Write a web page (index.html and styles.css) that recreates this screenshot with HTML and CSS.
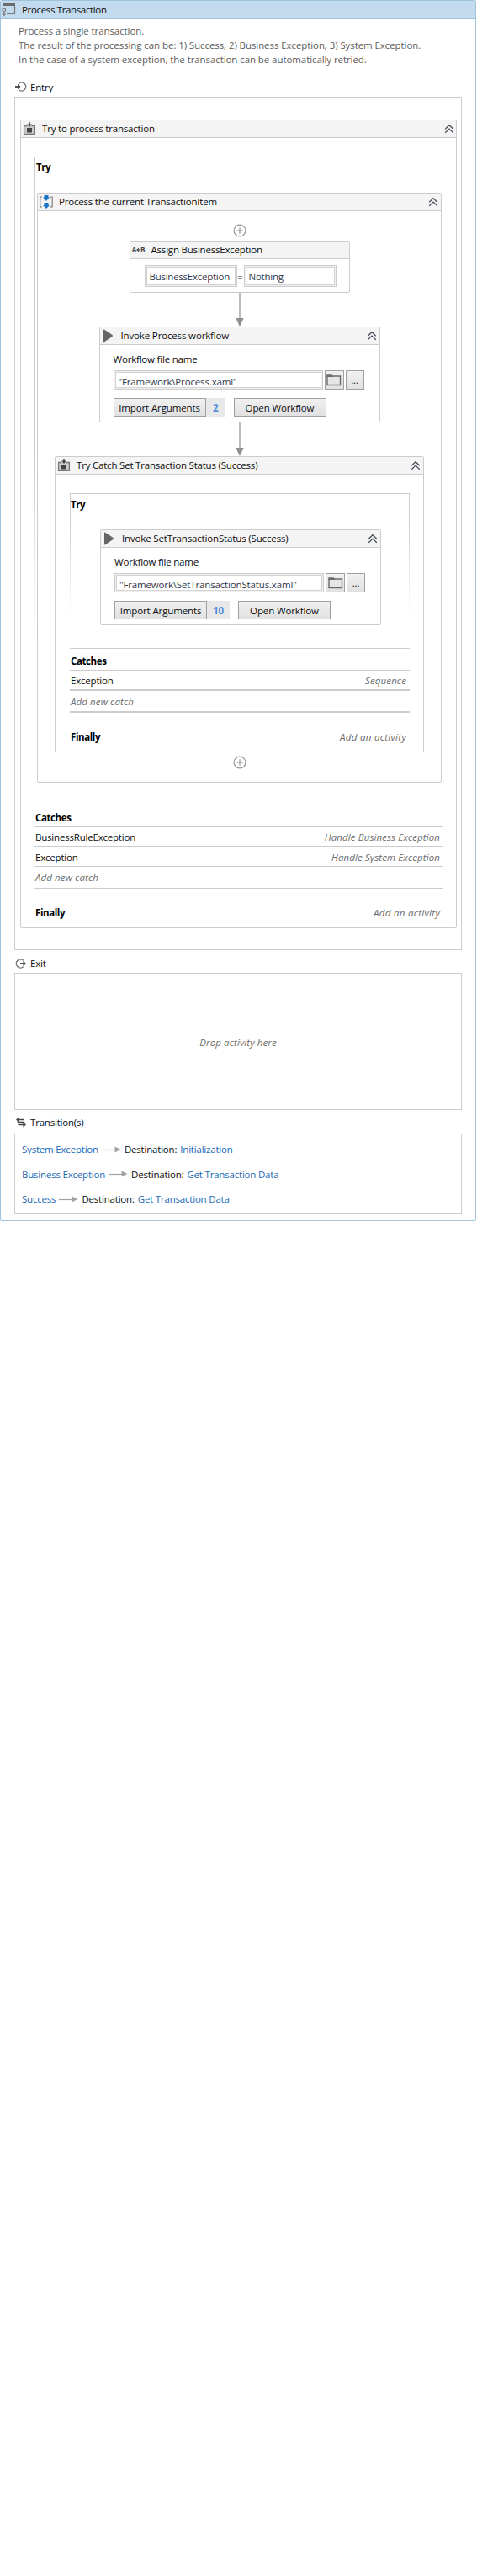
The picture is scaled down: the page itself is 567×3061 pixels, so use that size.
FILE: index.html
```html
<!DOCTYPE html>
<html lang="en">
<head>
<meta charset="utf-8">
<title>Process Transaction</title>
<link rel="stylesheet" href="styles.css">
</head>
<body>
<svg class="defs" width="0" height="0">
  <symbol id="chev" viewBox="0 0 12 12"><path d="M1.2 6.3 6 1.7l4.800 4.600M1.200 10.700 6 6.100l4.800 4.600" fill="none" stroke="#4a4f5e" stroke-width="1.300"/></symbol>
  <symbol id="trycatch" viewBox="0 0 16 16"><path d="M1.600 4.500V14.300H14.400V4.500" fill="#ccc"/><path d="M5.500 4.500H1.600V14.300H14.400V4.500H10.500" fill="none" stroke="#777" stroke-width="1.300"/><rect x="5" y="7" width="6" height="5.500" fill="#444"/><path d="M7.200 0h1.600v2.500H11L8 6 5 2.500h2.200z" fill="#444"/></symbol>
  <symbol id="plus" viewBox="0 0 16 16"><circle cx="8" cy="8" r="6.900" fill="#fff" stroke="#8f8f8f" stroke-width="1.100"/><path d="M8 4.200v7.600M4.200 8h7.600" stroke="#8f8f8f" stroke-width="1.100"/></symbol>
  <symbol id="play" viewBox="0 0 13 16"><path d="M1 1.200Q1 0 2.200.7L11.500 7.100Q12.500 8 11.500 8.900L2.200 15.300Q1 16 1 14.800z" fill="#666"/></symbol>
  <symbol id="down" viewBox="0 0 10 40"><path d="M5 0v32" stroke="#8f8f8f" stroke-width="1.200"/><path d="M.3 30h9.400L5 40z" fill="#8f8f8f"/></symbol>
  <symbol id="folder" viewBox="0 0 18 14"><path d="M1 2h15.500v10.500H1z" fill="#e6e6e6" stroke="#6b6b6b" stroke-width="1.400"/><path d="M.3.300h6.500l1.400 2.700H.3z" fill="#6b6b6b"/></symbol>
  <symbol id="right" viewBox="0 0 23 8"><path d="M0 4.500h17" stroke="#a3a3a3" stroke-width="1.200"/><path d="M15.500.5 22.500 4l-7 3.500z" fill="#a3a3a3"/></symbol>
</svg>
<main class="state">
  <header class="state-head">
    <svg class="state-icon" width="17" height="17" viewBox="0 0 17 17"><path d="M1 .5h15V4H1z" fill="#6b6b6b"/><path d="M15.500 3v10.500H6" fill="none" stroke="#777" stroke-width="1.200"/><circle cx="2.800" cy="9" r="1.900" fill="none" stroke="#777" stroke-width="1.100"/><path d="M2.800 11v5M1 13.500l1.800 2 1.800-2" fill="none" stroke="#777" stroke-width="1.100"/></svg>
    <span>Process Transaction</span>
  </header>
  <div class="desc"><p>Process a single transaction.</p><p>The result of the processing can be: 1) Success, 2) Business Exception, 3) System Exception.</p><p>In the case of a system exception, the transaction can be automatically retried.</p></div>

  <div class="label label-entry"><svg width="14" height="12" viewBox="0 0 14 12"><path d="M4.300 2.300A5 5 0 1 1 4.300 9.700" fill="none" stroke="#777" stroke-width="1.500"/><path d="M0 6h4" stroke="#444" stroke-width="1.800"/><path d="M3 2.800 6.500 6 3 9.200z" fill="#444"/></svg><span>Entry</span></div>
  <section class="entry">
    <article class="card outer-try">
      <header class="head"><svg width="16" height="16"><use href="#trycatch"/></svg><span>Try to process transaction</span><svg class="chev" width="12" height="12"><use href="#chev"/></svg></header>
      <div class="try try-a">
        <h3>Try</h3>
        <article class="card sequence">
          <header class="head"><svg width="16" height="16" viewBox="0 0 16 16"><path d="M3 2H.8v12H3M13 2h2.200v12H13" fill="none" stroke="#777" stroke-width="1.100"/><path d="M5.500 0h5v2.500H12L8 7 4 2.500h1.500zM5.500 9h5v3H12l-4 4-4-4h1.500z" fill="#1a73c8"/></svg><span>Process the current TransactionItem</span><svg class="chev" width="12" height="12"><use href="#chev"/></svg></header>
          <div class="flow">
            <svg class="plus" width="16" height="16"><use href="#plus"/></svg>
            <article class="card assign">
              <header class="head"><b class="ab">A<svg width="5" height="6" viewBox="0 0 5 6"><path d="M0 3 3 .5v5zM2 2.300h3v1.400H2z" fill="#555"/></svg>B</b><span>Assign BusinessException</span></header>
              <div class="assign-row"><div class="input">BusinessException</div><i>=</i><div class="input">Nothing</div></div>
            </article>
            <svg class="down" width="10" height="40"><use href="#down"/></svg>
            <article class="card invoke">
              <header class="head"><svg width="13" height="16"><use href="#play"/></svg><span>Invoke Process workflow</span><svg class="chev" width="12" height="12"><use href="#chev"/></svg></header>
              <div class="body">
                <div class="field-label">Workflow file name</div>
                <div class="file-row"><div class="input path">"Framework\Process.xaml"</div><div class="btn"><svg width="18" height="14"><use href="#folder"/></svg></div><div class="btn dots">...</div></div>
                <div class="btn-row"><div class="btn wide">Import Arguments</div><b class="badge">2</b><div class="btn wide open">Open Workflow</div></div>
              </div>
            </article>
            <svg class="down" width="10" height="40"><use href="#down"/></svg>
            <article class="card inner-try">
              <header class="head"><svg width="16" height="16"><use href="#trycatch"/></svg><span>Try Catch Set Transaction Status (Success)</span><svg class="chev" width="12" height="12"><use href="#chev"/></svg></header>
              <div class="try try-b">
                <h3>Try</h3>
                <article class="card invoke">
                  <header class="head"><svg width="13" height="16"><use href="#play"/></svg><span>Invoke SetTransactionStatus (Success)</span><svg class="chev" width="12" height="12"><use href="#chev"/></svg></header>
                  <div class="body">
                    <div class="field-label">Workflow file name</div>
                    <div class="file-row"><div class="input path">"Framework\SetTransactionStatus.xaml"</div><div class="btn"><svg width="18" height="14"><use href="#folder"/></svg></div><div class="btn dots">...</div></div>
                    <div class="btn-row"><div class="btn wide">Import Arguments</div><b class="badge badge-lg">10</b><div class="btn wide open">Open Workflow</div></div>
                  </div>
                </article>
              </div>
              <div class="catches catches-b">
                <div class="row title"><b>Catches</b></div>
                <div class="row thick"><span>Exception</span><em>Sequence</em></div>
                <div class="row add thick"><em>Add new catch</em></div>
                <div class="row finally"><b>Finally</b><em>Add an activity</em></div>
              </div>
            </article>
            <svg class="plus plus-end" width="16" height="16"><use href="#plus"/></svg>
          </div>
        </article>
      </div>
      <div class="catches catches-a">
        <div class="row title"><b>Catches</b></div>
        <div class="row thick"><span>BusinessRuleException</span><em>Handle Business Exception</em></div>
        <div class="row short"><span>Exception</span><em>Handle System Exception</em></div>
        <div class="row add"><em>Add new catch</em></div>
        <div class="row finally"><b>Finally</b><em>Add an activity</em></div>
      </div>
    </article>
  </section>

  <div class="label label-exit"><svg width="14" height="12" viewBox="0 0 14 12"><path d="M9.700 2.300A5 5 0 1 0 9.700 9.700" fill="none" stroke="#777" stroke-width="1.500"/><path d="M6 6h5" stroke="#444" stroke-width="1.800"/><path d="M9.500 2.800 13 6l-3.500 3.200z" fill="#444"/></svg><span>Exit</span></div>
  <section class="exit"><em>Drop activity here</em></section>

  <div class="label label-trans"><svg width="14" height="13" viewBox="0 0 14 13"><path d="M3 3.500h7.500M3.500 9.500H11M3.500 3.500v3h7v3" fill="none" stroke="#444" stroke-width="1.500"/><path d="M4.500.5v6L1 3.500zM9.500 6.500v6l3.500-3z" fill="#444"/></svg><span>Transition(s)</span></div>
  <section class="transitions">
    <div class="tr"><a>System Exception</a><svg width="23" height="8"><use href="#right"/></svg><span>Destination:</span><a>Initialization</a></div>
    <div class="tr"><a>Business Exception</a><svg width="23" height="8"><use href="#right"/></svg><span>Destination:</span><a>Get Transaction Data</a></div>
    <div class="tr"><a>Success</a><svg width="23" height="8"><use href="#right"/></svg><span>Destination:</span><a>Get Transaction Data</a></div>
  </section>
</main>
</body>
</html>
```
FILE: styles.css
```css
* { box-sizing: border-box; }
body { margin: 0; background: #fff; color: #0c0c0c; font: 11.5px/17px "Open Sans", "Noto Sans", sans-serif; letter-spacing: -0.2px; white-space: nowrap; }
p, h3 { margin: 0; }
svg { display: block; flex: none; }
.defs { position: absolute; }
em { color: #6c6c6c; letter-spacing: 0.1px; }
b, h3 { font-weight: 700; font-size: 11.5px; color: #000; letter-spacing: -0.4px; }

.state { width: 566px; height: 1451px; border: 1px solid #9fc3dd; border-radius: 2px; }
.state-head { display: flex; align-items: center; gap: 7px; height: 21px; padding-left: 1px; background: #c2dbee; border-bottom: 1px solid #9fc3dd; letter-spacing: -0.35px; }
.desc { height: 67px; padding: 6px 0 0 21px; color: #5c5c5c; letter-spacing: -0.08px; }
.label { display: flex; align-items: center; gap: 4px; padding-left: 17px; }
.label-entry { height: 26px; padding-top: 2px; }
.label-exit { height: 27px; padding-top: 4px; }
.label-trans { height: 28px; padding-top: 1px; }

.entry, .exit, .transitions { width: 532px; margin-left: 16px; border: 1px solid #ccc; }
.entry { height: 1014px; padding: 26px 0 0 6px; }
.exit { height: 163px; display: flex; align-items: center; justify-content: center; padding-top: 2px; }
.transitions { height: 95px; padding: 3px 0 0 8px; }

.card { border: 1px solid #ccc; border-radius: 2px; background: #fff; }
.head { display: flex; align-items: center; height: 21px; padding: 0 3px 0 2px; background: #f4f4f4; border-bottom: 1px solid #ccc; }
.head > span { margin: -2px 0 0 7px; }
.chev { margin: -1px 0 0 auto; }
.outer-try { width: 519px; height: 961px; }
.outer-try > .head > .chev { margin-right: -1px; }
.try { border: 1px solid; border-bottom: 0; }
.try-a { width: 486px; height: 770px; margin: 22px 0 0 16px; padding: 3px 0 0 2px; border-image: linear-gradient(#ccc 45%, transparent 75%) 1; }
.try-a > h3 { height: 39px; margin-left: -1px; }
.sequence { width: 481px; height: 701px; }
.flow { display: flex; flex-direction: column; align-items: center; padding: 15px 0 0; }
.plus { margin-bottom: 4px; }
.plus-end { margin: 4px 0 0; }

.assign { width: 262px; height: 62px; }
.ab { display: flex; align-items: center; justify-content: center; width: 16px; font: 700 8px/16px "Open Sans", sans-serif; color: #444; letter-spacing: -0.3px; }
.assign-row { display: flex; align-items: center; padding: 7px 0 0 17px; }
.assign-row i { width: 8px; font-style: normal; text-align: center; color: #222; }
.input { height: 26px; width: 110px; border: 1px solid #ccc; box-shadow: inset 0 0 0 1px #f0f0f0, inset 0 0 0 2px #d2d2d2; color: #30384c; padding: 4px 0 0 5px; overflow: hidden; letter-spacing: -0.25px; }

.invoke { width: 334px; height: 114px; }
.invoke > .head > svg:first-child { margin-left: 1px; }
.invoke > .head > span { margin-left: 9px; letter-spacing: -0.15px; }
.body { padding: 8px 0 0 16px; }
.file-row { display: flex; gap: 2px; margin-top: 5px; }
.path { width: 249px; height: 23px; letter-spacing: -0.15px; }
.btn { display: flex; align-items: center; justify-content: center; width: 23px; height: 23px; border: 1px solid #a0a0a0; background: linear-gradient(#f0f0f0, #e1e1e1); }
.dots { width: 22px; }
.btn-row { display: flex; margin-top: 10px; }
.btn.wide { width: 110px; height: 22px; letter-spacing: -0.12px; }
.badge { width: 23px; height: 22px; background: #e8e8e8; color: #4b8fdb; text-align: center; line-height: 23px; }
.badge-lg { width: 27px; }
.open { margin-left: 10px; }

.inner-try { width: 439px; height: 352px; }
.try-b { width: 404px; height: 184px; margin: 22px 0 0 17px; padding: 4px 0 0 35px; border-image: linear-gradient(#ccc 15%, transparent 80%) 1; }
.try-b > h3 { height: 38px; margin-left: -35px; }

.catches { border-top: 1px solid #ccc; }
.row { display: flex; justify-content: space-between; align-items: center; height: 24px; border-bottom: 1px solid #ccc; padding: 0 4px 0 1px; }
.title { height: 26px; padding-top: 3px; }
.short { height: 23px; }
.thick { border-bottom-width: 2px; }
.add { height: 26px; }
.finally { height: 54px; padding-top: 2px; border: 0; }
.finally em { letter-spacing: 0.3px; }
.catches-a { width: 486px; margin-left: 16px; }
.catches-b { width: 404px; margin-left: 17px; }

.tr { display: flex; align-items: center; height: 29.5px; gap: 4px; }
.tr a { color: #1a6ab5; }
```
